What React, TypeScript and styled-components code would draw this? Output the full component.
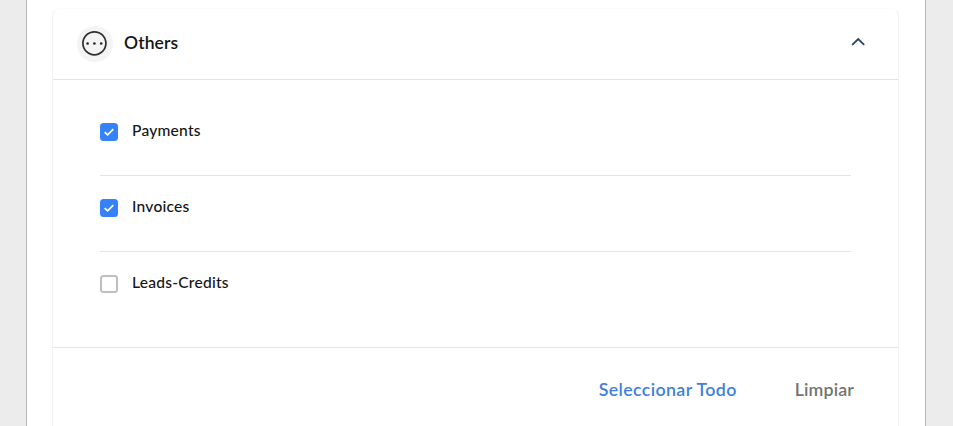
import React, { useState } from 'react';
import styled, { createGlobalStyle } from 'styled-components';

const GlobalStyle = createGlobalStyle`
  * { box-sizing: border-box; }
  html, body { margin: 0; height: 100%; overflow: hidden; }
  body {
    background: #ececec;
    color: #151515;
    font-family: 'Lato', 'Open Sans', sans-serif;
  }
`;

const Page = styled.main`
  width: 900px;
  height: 426px;
  margin-left: 26px;
  padding: 8px 26px 0 25px;
  overflow: hidden;
  background: #fff;
  border-left: 1px solid #b5b5b5;
  border-right: 1px solid #b5b5b5;
`;

const Card = styled.section`
  height: 440px;
  border: 1px solid #f3f3f3;
  border-top-color: #fbfbfb;
  border-radius: 8px;
`;

const Header = styled.header`
  display: flex;
  align-items: center;
  height: 71px;
  padding: 0 33px 0 24px;
  border-bottom: 1px solid #e2e2e2;
`;

const IconDisc = styled.span`
  display: flex;
  width: 36px;
  height: 36px;
  border-radius: 50%;
  background: #f4f4f4;
`;

const Title = styled.h2`
  flex: 1;
  margin: 0 0 2px 11px;
  font-size: 17.5px;
  line-height: 24px;
  font-weight: 600;
  letter-spacing: 0.1px;
`;

const Toggle = styled.button`
  display: flex;
  margin-bottom: 5px;
  padding: 0;
  border: 0;
  background: none;
`;

const List = styled.div`
  padding: 19px 47px 20px 47px;
`;

const Option = styled.label`
  display: flex;
  align-items: flex-start;
  height: 76px;
  padding-top: 23px;
  & + & {
    padding-top: 22px;
    border-top: 1px solid #e2e2e2;
  }
`;

const HiddenInput = styled.input`
  appearance: none;
  width: 0;
  height: 0;
  margin: 0;
`;

const Box = styled.span<{ $checked: boolean }>`
  display: flex;
  width: 18px;
  height: 18px;
  margin-top: 1px;
  border-radius: 3.5px;
  background: ${({ $checked }) => ($checked ? '#3582fb' : '#fff')};
  box-shadow: ${({ $checked }) => ($checked ? 'none' : 'inset 0 0 0 2px #bfbfbf')};
`;

const OptionText = styled.span`
  margin-left: 14px;
  font-size: 15.6px;
  line-height: 17px;
  font-weight: 500;
  letter-spacing: 0.22px;
`;

const Footer = styled.footer`
  display: flex;
  justify-content: flex-end;
  gap: 58px;
  height: 90px;
  padding: 29px 44px 0 0;
  border-top: 1px solid #e2e2e2;
`;

const Action = styled.button<{ $primary?: boolean }>`
  height: 24px;
  padding: 0;
  border: 0;
  background: none;
  font: 600 17.8px/24px 'Lato', 'Open Sans', sans-serif;
  letter-spacing: ${({ $primary }) => ($primary ? '0.36px' : '0.15px')};
  color: ${({ $primary }) => ($primary ? '#3f7fe0' : '#737373')};
`;

const options = ['Payments', 'Invoices', 'Leads-Credits'];

export default function App() {
  const [selected, setSelected] = useState(['Payments', 'Invoices']);
  const [open, setOpen] = useState(true);
  const toggle = (name: string) =>
    setSelected((s) => (s.includes(name) ? s.filter((n) => n !== name) : [...s, name]));

  return (
    <>
      <GlobalStyle />
      <Page>
        <Card>
          <Header>
            <IconDisc>
              <svg width="36" height="36" viewBox="0 0 36 36">
                <circle cx="17.4" cy="17.3" r="11.5" fill="none" stroke="#303030" strokeWidth="1.7" />
                <g fill="#252525">
                  <circle cx="10.6" cy="17.5" r="1.3" />
                  <circle cx="17.4" cy="17.5" r="1.3" />
                  <circle cx="24.2" cy="17.5" r="1.3" />
                </g>
              </svg>
            </IconDisc>
            <Title>Others</Title>
            <Toggle aria-label="Toggle section" onClick={() => setOpen(!open)}>
              <svg width="14" height="10" viewBox="0 0 14 10">
                <path d="M1.2 7.9 7.2 2.1l6 5.8" fill="none" stroke="#294365" strokeWidth="1.8" />
              </svg>
            </Toggle>
          </Header>
          {open && (
            <>
              <List>
                {options.map((name) => {
                  const checked = selected.includes(name);
                  return (
                    <Option key={name}>
                      <HiddenInput type="checkbox" checked={checked} onChange={() => toggle(name)} />
                      <Box $checked={checked}>
                        {checked && (
                          <svg width="18" height="18" viewBox="0 0 18 18">
                            <path d="M4.7 9.1 7.6 11.8l5.7-5.6" fill="none" stroke="#fff" strokeWidth="1.7" />
                          </svg>
                        )}
                      </Box>
                      <OptionText>{name}</OptionText>
                    </Option>
                  );
                })}
              </List>
              <Footer>
                <Action $primary onClick={() => setSelected(options)}>
                  Seleccionar Todo
                </Action>
                <Action onClick={() => setSelected([])}>Limpiar</Action>
              </Footer>
            </>
          )}
        </Card>
      </Page>
    </>
  );
}
